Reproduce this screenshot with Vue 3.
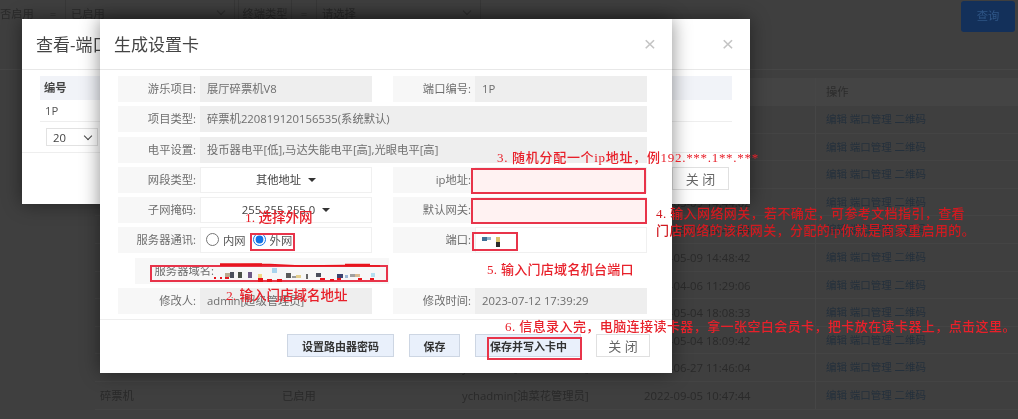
<template>
  <div class="page">
    <!-- 底层页面（已被遮罩压暗） -->
    <div class="filter">
      <span class="f-label first">否启用</span>
      <span class="f-eq">=</span>
      <span class="f-box wide">已启用<i class="chev"></i></span>
      <span class="f-label type">终端类型</span>
      <span class="f-eq">=</span>
      <span class="f-box wide2">请选择<i class="chev"></i></span>
      <span class="query">查询</span>
    </div>
    <div class="table">
      <div class="t-row t-head">
        <span></span><span></span><span></span><span></span><span class="cell-op">操作</span>
      </div>
      <div class="t-row" v-for="row in rows" :key="row.id">
        <span>碎票机</span>
        <span>已启用</span>
        <span>ychadmin[油菜花管理员]</span>
        <span>{{ row.time }}</span>
        <span class="cell-op link">编辑 端口管理 二维码</span>
      </div>
    </div>

    <!-- 第一层弹窗 -->
    <div class="modal modal-back">
      <div class="m-head">
        <span class="m-title">查看-端口</span>
        <span class="m-close">×</span>
      </div>
      <div class="back-body">
        <div class="back-th">编号</div>
        <div class="back-td">1P</div>
        <div class="back-pager"><span class="pager-sel">20<i class="chev dark"></i></span></div>
      </div>
      <div class="back-foot"><span class="btn btn-plain">关 闭</span></div>
    </div>

    <!-- 第二层弹窗 -->
    <div class="modal modal-front">
      <div class="m-head">
        <span class="m-title">生成设置卡</span>
        <span class="m-close">×</span>
      </div>
      <div class="form">
        <div class="f-row">
          <label>游乐项目:</label><div class="val ro">展厅碎票机V8</div>
        </div>
        <div class="f-row">
          <label>端口编号:</label><div class="val ro">1P</div>
        </div>
        <div class="f-row span2">
          <label>项目类型:</label><div class="val ro">碎票机220819120156535(系统默认)</div>
        </div>
        <div class="f-row span2">
          <label>电平设置:</label><div class="val ro">投币器电平[低],马达失能电平[高],光眼电平[高]</div>
        </div>
        <div class="f-row">
          <label>网段类型:</label><div class="val sel">其他地址<i class="caret"></i></div>
        </div>
        <div class="f-row">
          <label>ip地址:</label><div class="val"></div>
        </div>
        <div class="f-row">
          <label>子网掩码:</label><div class="val sel">255.255.255.0<i class="caret"></i></div>
        </div>
        <div class="f-row">
          <label>默认网关:</label><div class="val"></div>
        </div>
        <div class="f-row">
          <label>服务器通讯:</label>
          <div class="val radios">
            <label class="radio"><input type="radio" name="net" />内网</label>
            <label class="radio"><input type="radio" name="net" checked />外网</label>
          </div>
        </div>
        <div class="f-row">
          <label>端口:</label><div class="val"></div>
        </div>
        <div class="f-row domain">
          <label>服务器域名:</label>
        </div>
        <div></div>
        <div class="f-row">
          <label>修改人:</label><div class="val ro">admin[超级管理员]</div>
        </div>
        <div class="f-row">
          <label>修改时间:</label><div class="val ro">2023-07-12 17:39:29</div>
        </div>
      </div>
      <div class="m-foot">
        <span class="btn btn-blue router">设置路由器密码</span>
        <span class="btn btn-blue save">保存</span>
        <span class="btn btn-blue write">保存并写入卡中</span>
        <span class="btn btn-plain close2">关 闭</span>
      </div>
    </div>

    <!-- 教程标注 -->
    <div class="mark box-ip"></div>
    <div class="mark box-gw"></div>
    <div class="mark box-port"></div>
    <div class="mark box-radio"></div>
    <div class="mark box-domain"></div>
    <div class="mark box-write"></div>

    <svg class="smear" viewBox="210 258 180 26" width="180" height="26">
      <path d="M220 265 L270 264.5 L300 266 L345 265.5 L380 266" stroke="#e8141c" stroke-width="1.6" fill="none" />
      <path d="M220 264.5 L262 264.5 M345 265 L370 265" stroke="#e8141c" stroke-width="2.6" fill="none" />
      <rect v-for="(r, i) in smears" :key="i" :x="r[0]" :y="r[1]" :width="r[2]" :height="r[3]" :fill="r[4]" />
    </svg>
    <svg class="smear-port" viewBox="0 0 24 14" width="24" height="14">
      <rect x="0" y="1" width="5" height="4" fill="#3f6f96" />
      <rect x="5" y="1" width="4" height="3" fill="#8fb4cc" />
      <rect x="14" y="1" width="4" height="5" fill="#d9c36a" />
      <rect x="14" y="6" width="4" height="5" fill="#2b2b2b" />
    </svg>

    <p class="note n3">3. 随机分配一个ip地址，例192.***.1**.***</p>
    <p class="note n4">4. 输入网络网关，若不确定，可参考文档指引，查看<br />门店网络的该段网关，分配的ip你就是商家重启用的。</p>
    <p class="note n1">1. 选择外网</p>
    <p class="note n2">2. 输入门店域名地址</p>
    <p class="note n5">5. 输入门店域名机台端口</p>
    <p class="note n6">6. 信息录入完，电脑连接读卡器，拿一张空白会员卡，把卡放在读卡器上，点击这里。</p>
  </div>
</template>

<script setup>
const times = [
  '2022-05-09 14:40:12',
  '2022-05-09 14:41:20',
  '2022-05-09 14:42:36',
  '2022-05-09 14:44:02',
  '2022-05-09 14:46:44',
  '2022-05-09 14:48:42',
  '2022-04-06 11:29:06',
  '2022-05-04 18:08:33',
  '2022-05-04 18:09:42',
  '2022-06-27 11:46:04',
  '2022-09-05 10:47:44'
]
const rows = times.map((time, id) => ({ id, time }))

// 域名打码留下的色块 [x, y, w, h, color]
const smears = [
  [214, 277, 2, 2, '#e8141c'], [220, 277, 2, 2, '#e8141c'], [225, 277, 4, 2, '#e8141c'],
  [225, 273, 5, 4, '#b9a98f'], [230, 272, 4, 6, '#4b4f5c'], [238, 272, 4, 6, '#4a5148'],
  [248, 272, 4, 6, '#6d5a86'], [258, 274, 4, 4, '#efd98a'], [272, 268, 5, 5, '#a9d4ee'],
  [258, 278, 5, 4, '#e8141c'], [267, 279, 5, 3, '#e8141c'], [277, 279, 5, 3, '#e8141c'],
  [286, 273, 5, 5, '#5a5a5a'], [292, 276, 5, 2, '#9a9a9a'], [296, 275, 5, 3, '#e4cf8e'],
  [306, 274, 2, 5, '#666'], [316, 273, 5, 4, '#4b4f5c'], [320, 278, 5, 2, '#e8141c'],
  [330, 279, 4, 2, '#e8141c'], [337, 274, 6, 4, '#3c4470'], [337, 278, 4, 2, '#e8141c'],
  [345, 275, 3, 3, '#9db7d6'], [350, 274, 5, 3, '#a0a0a0'], [355, 274, 5, 3, '#d8bb94'],
  [358, 278, 4, 2, '#e8141c'], [370, 278, 4, 2, '#e8141c'], [371, 273, 4, 4, '#b4dff0']
]
</script>

<style>
html, body { margin: 0; background: #3f3f3f; overflow: hidden; }
</style>

<style scoped>
.page {
  position: relative;
  width: 1018px;
  height: 419px;
  overflow: hidden;
  background: #3f3f3f;
  font-family: "Open Sans", "Noto Sans CJK SC", sans-serif;
  font-size: 11.3px;
  color: #2a2a2a;
  filter: blur(0.3px);
}

/* 背景筛选栏 */
.filter {
  display: flex;
  height: 70px;
  align-items: flex-start;
  border-bottom: 1px solid #464646;
  box-sizing: border-box;
}
.f-label, .f-box, .f-eq { height: 24px; line-height: 28px; box-sizing: border-box; }
.f-label.first { width: 41px; }
.f-eq { width: 24px; text-align: center; }
.f-box { position: relative; border: 1px solid #383838; border-top: 0; padding-left: 5px; }
.f-box.wide { width: 170px; }
.f-box.wide2 { width: 165px; }
.f-label.type { width: 54px; margin-left: 3px; border: 1px solid #383838; border-top: 0; text-align: center; }
.chev {
  position: absolute;
  right: 10px;
  top: 8px;
  width: 5px;
  height: 5px;
  border-right: 1px solid #2f2f2f;
  border-bottom: 1px solid #2f2f2f;
  transform: rotate(45deg);
}
.query {
  margin: 1px 3px 0 auto;
  width: 54px;
  height: 31px;
  line-height: 29px;
  text-align: center;
  border-radius: 3px;
  background: #13305a;
  color: #2f5687;
}

/* 背景表格 */
.table { margin: 8px 0 0 95px; }
.t-row {
  display: grid;
  grid-template-columns: 182px 180px 182px 176px 1fr;
  height: 27.6px;
  line-height: 27px;
  border-bottom: 1px solid #444;
  box-sizing: border-box;
}
.t-row > span { padding-left: 5px; white-space: nowrap; }
.t-head { height: 28px; background: #444; color: #2c2c2c; }
.t-row > .cell-op { border-left: 1px solid #464646; padding-left: 10px; }
.t-row > .link { color: #24303c; font-size: 10.5px; }

/* 弹窗 */
.modal {
  position: absolute;
  top: 19px;
  background: #fff;
  box-shadow: 0 0 18px rgba(0, 0, 0, 0.45);
  display: flex;
  flex-direction: column;
}
.modal-back { left: 22px; width: 728px; height: 185px; }
.modal-front { left: 100px; width: 572px; height: 354px; }
.m-head {
  height: 51px;
  flex: none;
  display: flex;
  align-items: center;
  justify-content: space-between;
  border-bottom: 1px solid #e8e8e8;
  box-sizing: border-box;
  padding: 0 16px 2px 14px;
}
.m-title { font-size: 17px; color: #444; }
.m-close { font-size: 21px; color: #c4c4c4; line-height: 1; font-family: "Liberation Sans", sans-serif; }

.back-body { padding: 6px 18px 0; flex: 1; }
.back-th {
  height: 24px;
  line-height: 24px;
  background: #f1f3f8;
  padding-left: 4px;
  font-weight: 700;
  color: #444;
}
.back-td { height: 21px; line-height: 21px; padding-left: 5px; border-bottom: 1px solid #eee; color: #555; }
.back-pager { padding: 6px 0 0 6px; }
.pager-sel {
  position: relative;
  display: block;
  width: 52px;
  height: 18px;
  line-height: 18px;
  padding-left: 6px;
  box-sizing: border-box;
  border: 1px solid #e2e2e2;
  color: #444;
}
.chev.dark { top: 4px; right: 6px; border-color: #444; }
.back-foot {
  display: flex;
  justify-content: flex-end;
  height: 52px;
  box-sizing: border-box;
  padding: 14px 21px 0 0;
  border-top: 1px solid #eee;
}

/* 表单 */
.form {
  display: grid;
  grid-template-columns: 254px 254px;
  grid-auto-rows: 26px;
  column-gap: 21px;
  row-gap: 4.3px;
  padding: 6px 0 0 18px;
}
.f-row { display: flex; background: #f7f7f7; }
.f-row.span2 { grid-column: span 2; }
.f-row > label {
  flex: none;
  width: 82px;
  padding-right: 4px;
  box-sizing: border-box;
  text-align: right;
  line-height: 26px;
  color: #6e6e6e;
}
.f-row.domain { margin: 0 -17px 0 17px; }
.f-row.domain > label { width: 83px; padding-right: 4px; }
.val {
  flex: 1;
  min-width: 0;
  line-height: 26px;
  padding-left: 7px;
  box-sizing: border-box;
  background: #fff;
  color: #555;
  border: 1px solid #f0f0f0;
}
.val.ro { background: #eee; border: 0; color: #6e6e6e; }
.val.sel { text-align: center; padding-left: 0; line-height: 24px; color: #444; }
.caret {
  display: inline-block;
  margin-left: 7px;
  vertical-align: 2px;
  border-left: 4px solid transparent;
  border-right: 4px solid transparent;
  border-top: 4px solid #333;
}
.radios { display: flex; gap: 7px; padding-left: 5px; line-height: 24px; }
.radio { display: flex; align-items: center; color: #555; padding-top: 1px; }
.radio input { width: 13px; height: 13px; margin: 0 4px 3px 0; accent-color: #1273e6; }

/* 底部按钮 */
.m-foot {
  margin-top: 4.5px;
  flex: 1;
  border-top: 1px solid #eee;
  display: flex;
  align-items: flex-start;
  padding: 14px 0 0 187px;
}
.btn {
  display: block;
  height: 23px;
  line-height: 23px;
  text-align: center;
  box-sizing: border-box;
}
.btn-blue {
  background: #e9f0fb;
  border: 1px solid #cdd6e3;
  color: #333;
  font-size: 11px;
  font-weight: 700;
}
.btn-plain {
  background: #fff;
  border: 1px solid #e0e0e0;
  color: #666;
  font-size: 13px;
}
.modal-back .btn-plain { width: 57px; }
.router { width: 107px; margin-right: 15px; }
.save { width: 51px; margin-right: 15px; }
.write { width: 106px; margin-right: 15px; padding-left: 14px; white-space: nowrap; text-align: left; }
.close2 { width: 54px; }

/* 标注层 */
.mark { position: absolute; box-sizing: border-box; border: 2px solid #e8344a; }
.box-ip { left: 471px; top: 168px; width: 175px; height: 26px; background: #fff2f2; }
.box-gw { left: 471px; top: 198px; width: 176px; height: 26px; background: #fff2f2; }
.box-port { left: 472px; top: 232px; width: 46px; height: 19px; }
.box-radio { left: 250px; top: 233px; width: 45px; height: 18px; }
.box-domain { left: 150px; top: 265px; width: 238px; height: 17px; }
.box-write { left: 487px; top: 337px; width: 95px; height: 23px; }
.smear { position: absolute; left: 210px; top: 258px; }
.smear-port { position: absolute; left: 482px; top: 236px; }

.note {
  position: absolute;
  margin: 0;
  white-space: nowrap;
  font-family: "Liberation Serif", "Noto Sans CJK SC", serif;
  color: #e8202a;
  font-size: 13px;
  font-weight: 500;
  line-height: 18px;
}
.n3 { left: 497px; top: 149px; letter-spacing: 0.7px; }
.n4 { left: 656px; top: 205px; font-size: 13px; letter-spacing: 0.4px; line-height: 17px; color: #d01a20; }
.n1 { left: 245px; top: 209px; font-size: 13.5px; }
.n2 { left: 226px; top: 287px; font-size: 13.5px; }
.n5 { left: 487px; top: 261px; letter-spacing: 0.3px; }
.n6 { left: 505px; top: 318px; letter-spacing: 0.42px; }
</style>
